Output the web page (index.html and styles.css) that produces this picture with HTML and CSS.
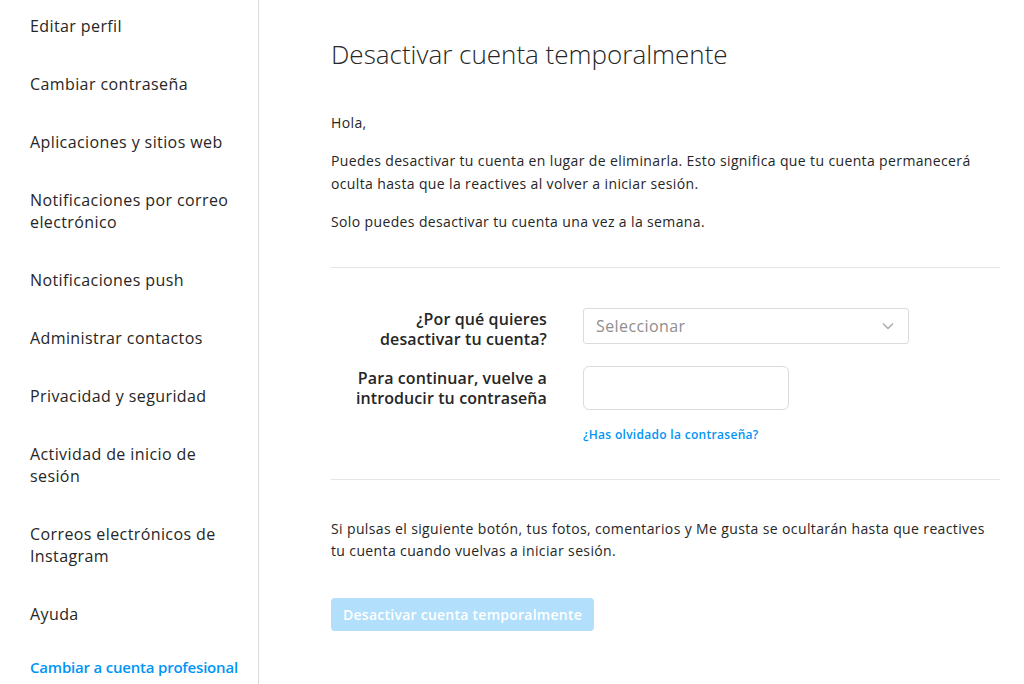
FILE: index.html
```html
<!DOCTYPE html>
<html lang="es">
<head>
    <meta charset="UTF-8">
    <meta name="viewport" content="width=device-width, initial-scale=1.0">
    <title>Desactivar cuenta temporalmente</title>
    <link rel="stylesheet" href="styles.css">
</head>
<body>
    <div class="layout">
        <aside class="sidebar">
            <ul class="nav">
                <li><a href="#">Editar perfil</a></li>
                <li><a href="#">Cambiar contraseña</a></li>
                <li><a href="#">Aplicaciones y sitios web</a></li>
                <li><a href="#">Notificaciones por correo electrónico</a></li>
                <li><a href="#">Notificaciones push</a></li>
                <li><a href="#">Administrar contactos</a></li>
                <li><a href="#">Privacidad y seguridad</a></li>
                <li><a href="#">Actividad de inicio de sesión</a></li>
                <li><a href="#">Correos electrónicos de Instagram</a></li>
                <li><a href="#">Ayuda</a></li>
            </ul>
            <a class="pro-link" href="#">Cambiar a cuenta profesional</a>
        </aside>

        <main class="content">
            <h1>Desactivar cuenta temporalmente</h1>

            <div class="intro">
                <p>Hola,</p>
                <p>Puedes desactivar tu cuenta en lugar de eliminarla. Esto significa que tu cuenta permanecerá oculta hasta que la reactives al volver a iniciar sesión.</p>
                <p>Solo puedes desactivar tu cuenta una vez a la semana.</p>
            </div>

            <form class="deactivate-form">
                <div class="form-row">
                    <label class="form-label" for="reason">¿Por qué quieres desactivar tu cuenta?</label>
                    <div class="select" id="reason">
                        <span>Seleccionar</span>
                        <svg width="12" height="8" viewBox="0 0 12 8"><path d="M1 1.5l5 5 5-5" fill="none" stroke="#a8a8a8" stroke-width="1.4"/></svg>
                    </div>
                </div>
                <div class="form-row">
                    <label class="form-label" for="password">Para continuar, vuelve a introducir tu contraseña</label>
                    <div>
                        <input type="password" id="password" class="text-input">
                        <a class="forgot" href="#">¿Has olvidado la contraseña?</a>
                    </div>
                </div>
            </form>

            <div class="confirm">
                <p>Si pulsas el siguiente botón, tus fotos, comentarios y Me gusta se ocultarán hasta que reactives tu cuenta cuando vuelvas a iniciar sesión.</p>
                <button type="button" disabled>Desactivar cuenta temporalmente</button>
            </div>
        </main>
    </div>
</body>
</html>
```

FILE: styles.css
```css
* {
    margin: 0;
    padding: 0;
    box-sizing: border-box;
}

body {
    font-family: "Open Sans", Arial, sans-serif;
    color: #262626;
    background: #fff;
}

a {
    text-decoration: none;
}

.layout {
    display: flex;
    min-height: 100vh;
}

/* sidebar */
.sidebar {
    width: 259px;
    flex-shrink: 0;
    border-right: 1px solid #dbdbdb;
}

.nav {
    list-style: none;
}

.nav a {
    display: block;
    padding: 18px 16px 18px 30px;
    font-size: 16px;
    line-height: 22px;
    letter-spacing: 0.4px;
    color: #262626;
}

.nav li:first-child a {
    padding-top: 15px;
}

.pro-link {
    display: block;
    padding: 13px 4px 13px 30px;
    font-size: 15px;
    line-height: 22px;
    font-weight: 600;
    letter-spacing: -0.2px;
    white-space: nowrap;
    color: #0095f6;
}

/* main */
.content {
    flex: 1;
    padding: 39px 24px 0 72px;
}

h1 {
    font-size: 26px;
    line-height: 30px;
    font-weight: 300;
}

.intro {
    margin-top: 42px;
    padding-bottom: 34px;
    border-bottom: 1px solid #e6e6e6;
}

.intro p,
.confirm p {
    font-size: 14px;
    line-height: 23px;
    letter-spacing: 0.37px;
    margin-bottom: 15px;
}

.intro p:last-child {
    margin-bottom: 0;
}

.deactivate-form {
    padding: 40px 0 36px;
    border-bottom: 1px solid #e6e6e6;
}

.form-row {
    display: flex;
    align-items: flex-start;
    margin-bottom: 17px;
}

.form-row:last-child {
    margin-bottom: 0;
}

.form-label {
    width: 252px;
    padding: 1px 36px 0 14px;
    text-align: right;
    font-size: 16px;
    line-height: 20px;
    font-weight: 600;
    letter-spacing: 0.1px;
}

.form-row:last-child .form-label {
    padding-top: 2px;
}

.select {
    width: 326px;
    height: 36px;
    border: 1px solid #dbdbdb;
    border-radius: 3px;
    display: flex;
    align-items: center;
    justify-content: space-between;
    padding: 0 14px 0 12px;
    font-size: 16px;
    letter-spacing: 0.4px;
    color: #8e8e8e;
}

.text-input {
    display: block;
    width: 206px;
    height: 44px;
    border: 1px solid #dbdbdb;
    border-radius: 6px;
    padding: 0 10px;
    font-size: 16px;
}

.forgot {
    display: block;
    margin-top: 17px;
    font-size: 12px;
    line-height: 16px;
    font-weight: 600;
    letter-spacing: 0.3px;
    color: #0095f6;
}

.confirm {
    padding-top: 38px;
}

.confirm p {
    line-height: 22px;
    margin-bottom: 36px;
}

button {
    height: 33px;
    padding: 0 12px;
    border: none;
    border-radius: 4px;
    background: #b2dffc;
    color: #fff;
    font-family: inherit;
    font-size: 14px;
    font-weight: 600;
    letter-spacing: 0.25px;
}
```
